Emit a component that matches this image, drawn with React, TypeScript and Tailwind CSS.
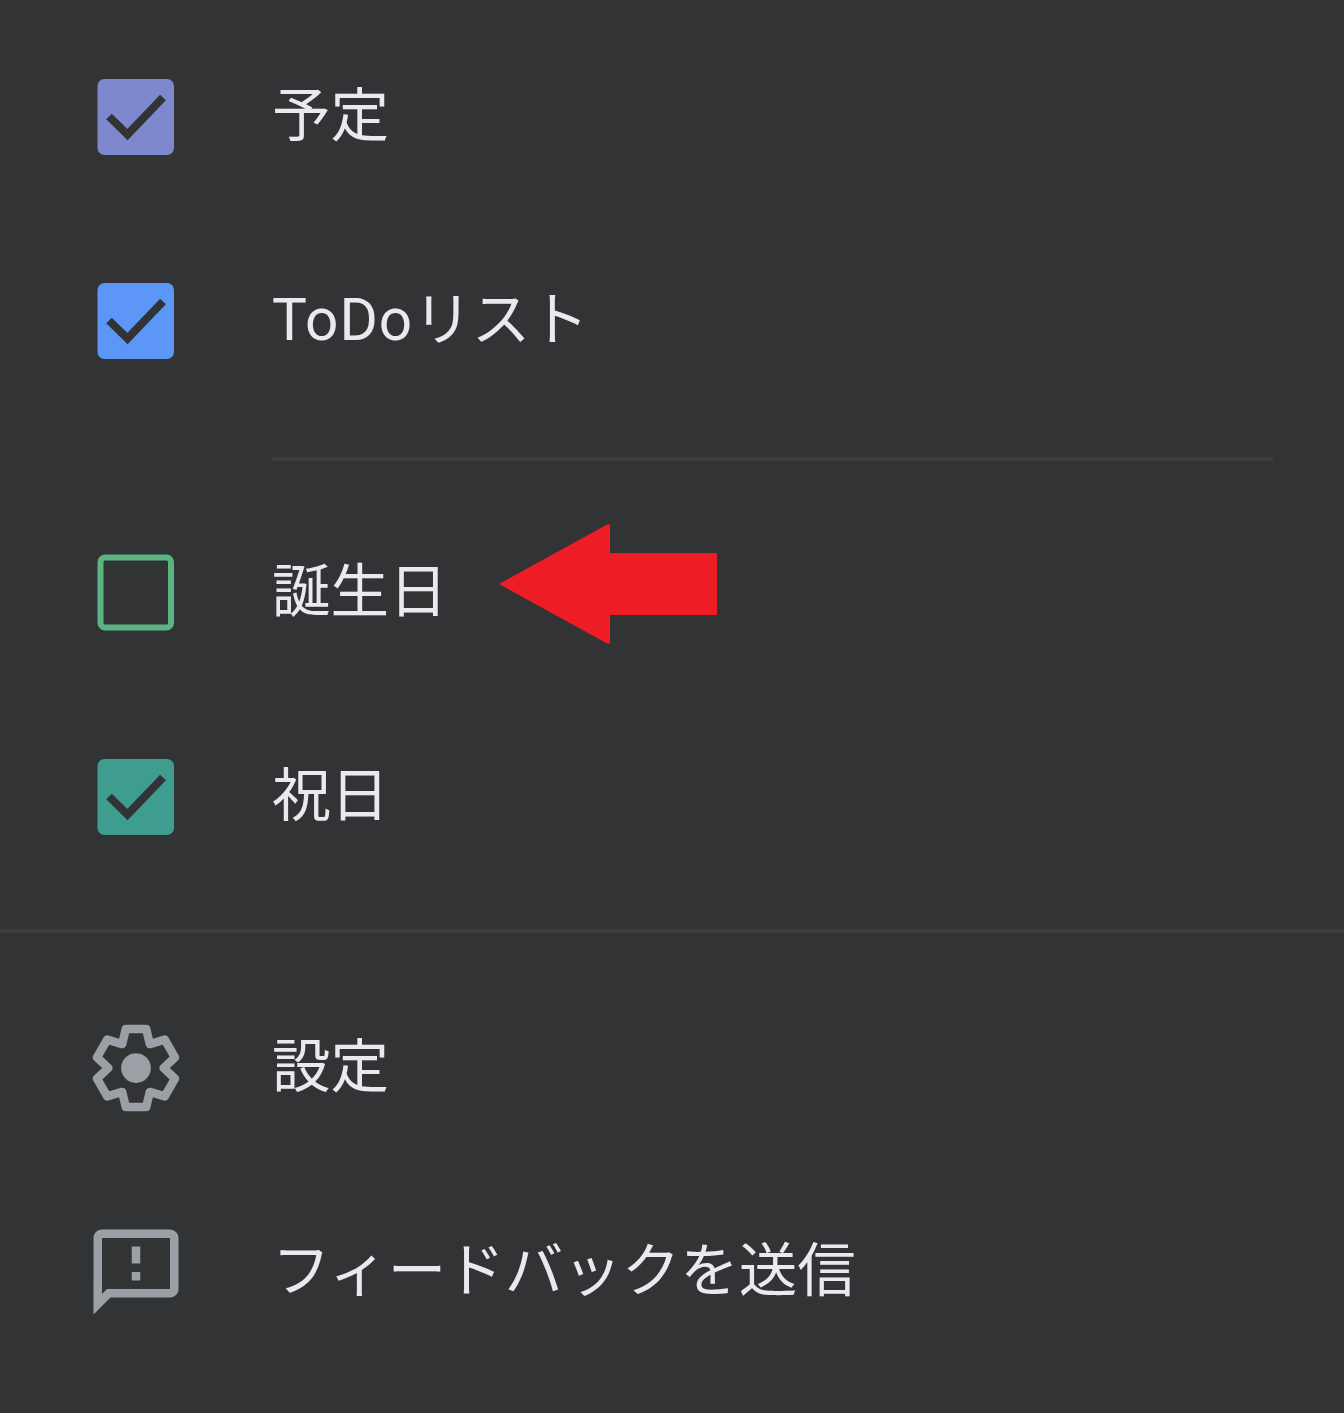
const checkColor = '#323335';

// gear outline: six teeth round the centre, drawn as one stroked line
const gearPoints = Array.from({ length: 6 }, (_, i) => {
  const a = (i * Math.PI) / 3 - Math.PI / 2;
  const v = a + Math.PI / 6;
  const ux = Math.cos(a);
  const uy = Math.sin(a);
  const tip = 9.2;
  const half = 2.4;
  return [
    [12 + ux * tip + uy * half, 12 + uy * tip - ux * half],
    [12 + ux * tip - uy * half, 12 + uy * tip + ux * half],
    [12 + Math.cos(v) * 6.5, 12 + Math.sin(v) * 6.5],
  ]
    .map(([x, y]) => `${x.toFixed(2)},${y.toFixed(2)}`)
    .join(' ');
}).join(' ');

function CheckBox({ color, checked = true }: { color: string; checked?: boolean }) {
  return (
    <svg width="102" height="102" viewBox="0 0 102 102" aria-hidden="true">
      {checked ? (
        <>
          <rect x="12.5" y="13" width="76.5" height="76" rx="7" fill={color} />
          <polyline
            points="24,50.5 42.5,68.5 78,31.5"
            fill="none"
            stroke={checkColor}
            strokeWidth="8"
          />
        </>
      ) : (
        <rect x="15.5" y="15.5" width="70.5" height="70" rx="4.5" fill="none" stroke={color} strokeWidth="6" />
      )}
    </svg>
  );
}

function GearIcon() {
  return (
    <svg width="102" height="102" viewBox="0 0 24 24" aria-hidden="true">
      <polygon
        points={gearPoints}
        fill="none"
        stroke="#9aa0a6"
        strokeWidth="2"
        strokeLinejoin="round"
      />
      <circle cx="12" cy="12" r="3.5" fill="#9aa0a6" />
    </svg>
  );
}

function FeedbackIcon() {
  return (
    <svg width="102" height="102" viewBox="0 0 24 24" fill="#9aa0a6" aria-hidden="true">
      <path d="M20 2H4c-1.1 0-1.99.9-1.99 2L2 22l4-4h14c1.1 0 2-.9 2-2V4c0-1.1-.9-2-2-2zm0 14H5.17L4 17.17V4h16v12zM11 12h2v2h-2zm0-6h2v4h-2z" />
    </svg>
  );
}

function Row({ icon, children }: { icon: React.ReactNode; children: React.ReactNode }) {
  return (
    <div className="flex h-[204px] items-center pl-[85px]">
      <div className="w-[102px] shrink-0">{icon}</div>
      <span className="ml-[85px] pb-[1px] text-[58.5px] leading-none text-[#e8eaed]">{children}</span>
    </div>
  );
}

export default function App() {
  return (
    <div
      className="relative h-[1413px] w-[1344px] overflow-hidden bg-[#323335] pt-[15px]"
      style={{ fontFamily: 'Roboto, "Noto Sans CJK JP", sans-serif' }}
    >
      <Row icon={<CheckBox color="#7e88cc" />}>予定</Row>
      <Row icon={<CheckBox color="#5c96f6" />}>
        <span className="tracking-[1px]">ToDo</span>リスト
      </Row>
      <div className="mt-[34px] mb-[30px] ml-[272px] mr-[71px] h-[4px] bg-[#3d3e40]" />
      <Row icon={<CheckBox color="#5bb381" checked={false} />}>誕生日</Row>
      <Row icon={<CheckBox color="#3f9d8f" />}>祝日</Row>
      <div className="mt-[30px] mb-[33px] h-[4px] bg-[#3d3e40]" />
      <Row icon={<GearIcon />}>設定</Row>
      <Row icon={<FeedbackIcon />}>フィードバックを送信</Row>

      {/* annotation drawn over the screenshot */}
      <svg className="absolute left-[495px] top-[520px]" width="226" height="128" viewBox="0 0 226 128" aria-hidden="true">
        <path d="M4 64 L113 4 Q115 4 115 6 V33 H222 V95 H115 V122 Q115 124 113 124 Z" fill="#ee1c25" />
      </svg>
    </div>
  );
}
